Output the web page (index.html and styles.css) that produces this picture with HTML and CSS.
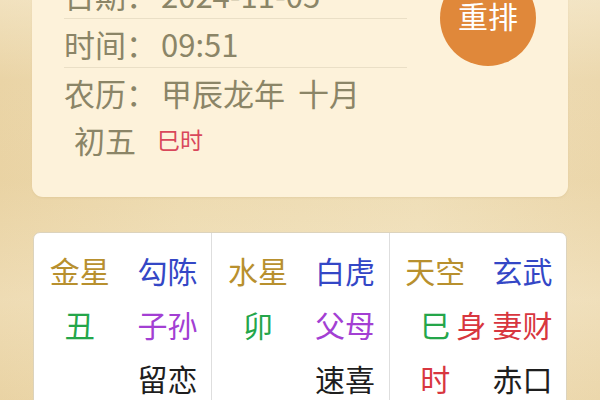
FILE: index.html
```html
<!DOCTYPE html>
<html lang="zh-CN">
<head>
<meta charset="utf-8">
<link rel="stylesheet" href="styles.css">
</head>
<body>
<div class="page">
  <section class="info-card">
    <div class="info">
      <div class="row line"><span class="label">日期：</span><span class="val">2024-11-05</span></div>
      <div class="row line"><span class="label">时间：</span><span class="val">09:51</span></div>
      <div class="row"><span class="label">农历：</span><span class="val">甲辰龙年</span><span class="val month">十月</span></div>
      <div class="row sub"><span class="day">初五</span><span class="hour">巳时</span></div>
    </div>
    <div class="redo">重排</div>
  </section>

  <section class="board">
    <div class="col">
      <div class="cell gold">金星</div><div class="cell blue">勾陈</div>
      <div class="cell green">丑</div><div class="cell purple">子孙</div>
      <div class="cell"></div><div class="cell dark">留恋</div>
    </div>
    <div class="col">
      <div class="cell gold">水星</div><div class="cell blue">白虎</div>
      <div class="cell green">卯</div><div class="cell purple">父母</div>
      <div class="cell"></div><div class="cell dark">速喜</div>
    </div>
    <div class="col">
      <div class="cell gold">天空</div><div class="cell blue">玄武</div>
      <div class="cell green"><span class="mark">巳<span class="shen">身</span></span></div><div class="cell red">妻财</div>
      <div class="cell red">时</div><div class="cell dark">赤口</div>
    </div>
  </section>
</div>
</body>
</html>
```

FILE: styles.css
```css
* { box-sizing: border-box; }
html, body { margin: 0; padding: 0; }
body {
  width: 600px;
  height: 400px;
  overflow: hidden;
  font-family: "Noto Sans CJK SC", "Noto Sans", sans-serif;
  background:
    linear-gradient(180deg, rgba(255,250,235,0.35) 0%, rgba(255,250,235,0) 20%, rgba(230,205,150,0.15) 45%, rgba(255,250,235,0.2) 75%, rgba(230,205,150,0.1) 100%),
    linear-gradient(90deg, #ead4a6 0%, #eedcb3 30%, #f0e0bb 70%, #ecd8ae 100%);
}
.page {
  padding: 0 32px;
}
.info-card {
  margin-top: -45px;
  padding: 15px 32px 35px 32px;
  background: #fdf2da;
  border-radius: 11px;
  display: flex;
  align-items: flex-start;
  gap: 33px;
  box-shadow: 0 1px 2px rgba(180,150,90,0.15);
}
.info {
  width: 343px;
  color: #8b8567;
  font-size: 31px;
}
.row {
  height: 48px;
  display: flex;
  align-items: center;
  white-space: nowrap;
}
.row.line {
  height: 49px;
  border-bottom: 1px solid #eadfc6;
}
.label { width: 97px; }
.month { margin-left: 13px; }
.row.sub {
  height: 46px;
  padding-left: 10px;
}
.day { width: 83px; }
.hour {
  color: #d9485b;
  font-size: 23px;
}
.redo {
  flex: none;
  width: 96px;
  height: 96px;
  border-radius: 50%;
  background: #e0883a;
  color: #fff;
  font-size: 30px;
  display: flex;
  align-items: center;
  justify-content: center;
  padding-bottom: 6px;
}
.board {
  margin: 35px 1px 0 1px;
  height: 200px;
  background: #fff;
  border: 1px solid #dcd3bd;
  border-radius: 7px;
  display: grid;
  grid-template-columns: 1fr 1fr 1fr;
}
.col {
  display: grid;
  grid-template-columns: 1fr 1fr;
  grid-auto-rows: 54px;
  padding-top: 10px;
  padding-left: 2px;
}
.col + .col { border-left: 1px solid #dedede; }
.cell {
  display: flex;
  align-items: center;
  justify-content: center;
  font-size: 30px;
  white-space: nowrap;
}
.gold { color: #b8902e; }
.blue { color: #3447c6; }
.green { color: #24a64a; }
.purple { color: #a33fd3; }
.red { color: #d8363f; }
.dark { color: #1e1e1e; }
.mark { position: relative; }
.shen {
  position: absolute;
  left: 100%;
  top: 0;
  margin-left: 6px;
  color: #d8363f;
}
```
